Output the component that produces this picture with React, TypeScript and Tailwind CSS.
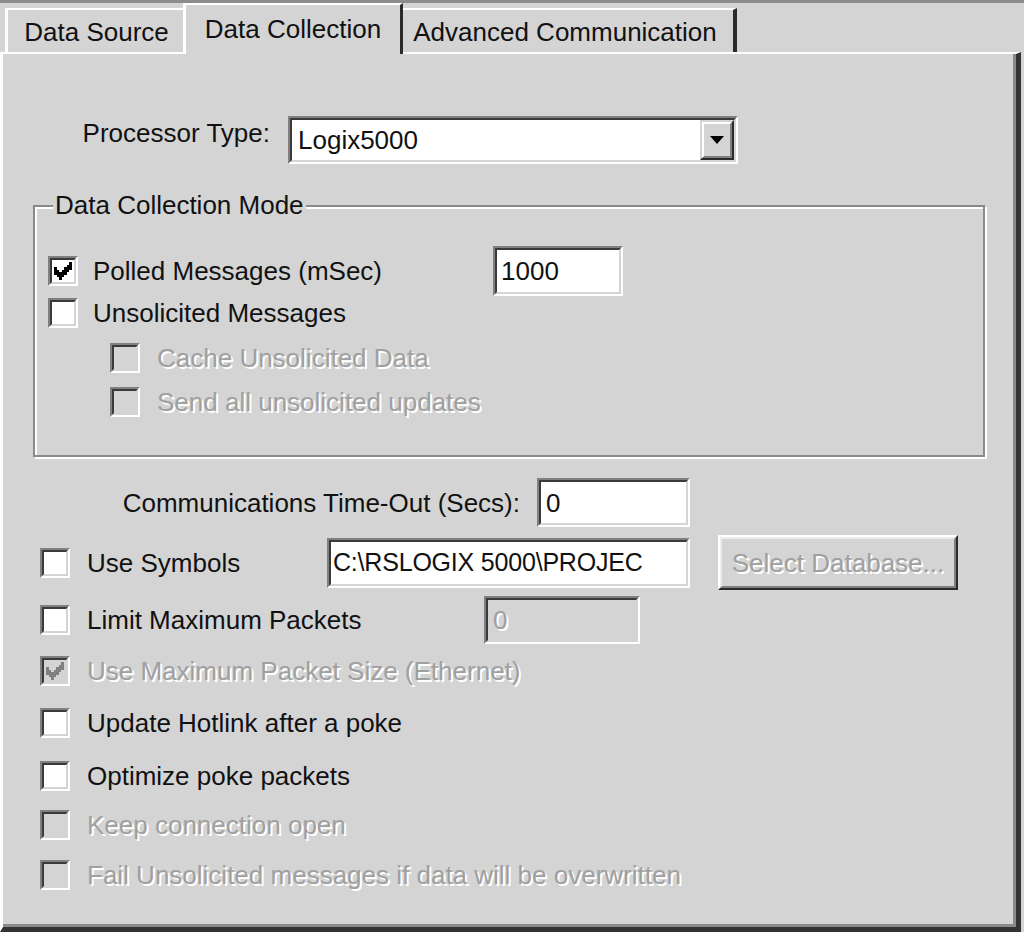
import React from "react";

const DIS = "text-[#a0a0a0] [text-shadow:2px_2px_0_#ffffff]";

function CheckMark({ color }: { color: string }) {
  const px: [number, number][] = [
    [6, 0],
    [5, 1], [6, 1],
    [0, 2], [4, 2], [5, 2], [6, 2],
    [0, 3], [1, 3], [3, 3], [4, 3], [5, 3],
    [0, 4], [1, 4], [2, 4], [3, 4], [4, 4],
    [1, 5], [2, 5], [3, 5],
    [2, 6],
  ];
  return (
    <svg width="18" height="18" viewBox="0 0 7 7" shapeRendering="crispEdges">
      {px.map(([x, y], i) => (
        <rect key={i} x={x} y={y} width="1" height="1" fill={color} />
      ))}
    </svg>
  );
}

function Check({ checked, disabled }: { checked?: boolean; disabled?: boolean }) {
  return (
    <div className="w-[30px] h-[30px] shrink-0 border-2 border-t-[#808080] border-l-[#808080] border-b-white border-r-white">
      <div
        className={
          disabled
            ? "w-full h-full border-2 border-t-[#3a3a3a] border-l-[#3a3a3a] border-b-[#d4d4d4] border-r-[#d4d4d4] bg-[#d4d4d4] flex items-center justify-center"
            : "w-full h-full border-2 border-t-[#3a3a3a] border-l-[#3a3a3a] border-b-[#d4d4d4] border-r-[#d4d4d4] bg-white flex items-center justify-center"
        }
      >
        {checked && <CheckMark color={disabled ? "#808080" : "#000000"} />}
      </div>
    </div>
  );
}

function Sunken({ className, children, disabled }: { className: string; children?: React.ReactNode; disabled?: boolean }) {
  return (
    <div className={"shrink-0 border-2 border-t-[#808080] border-l-[#808080] border-b-white border-r-white " + className}>
      <div
        className={
          disabled
            ? "w-full h-full border-2 border-t-[#3a3a3a] border-l-[#3a3a3a] border-b-[#d4d4d4] border-r-[#d4d4d4] bg-[#d4d4d4] flex items-center overflow-hidden"
            : "w-full h-full border-2 border-t-[#3a3a3a] border-l-[#3a3a3a] border-b-[#d4d4d4] border-r-[#d4d4d4] bg-white flex items-center overflow-hidden"
        }
      >
        {children}
      </div>
    </div>
  );
}

function CheckRow({
  label,
  checked,
  disabled,
  className,
}: {
  label: string;
  checked?: boolean;
  disabled?: boolean;
  className: string;
}) {
  return (
    <div className={"flex items-center h-[34px] " + className}>
      <Check checked={checked} disabled={disabled} />
      <span className={disabled ? "ml-[17px] whitespace-nowrap " + DIS : "ml-[17px] whitespace-nowrap text-[#111]"}>{label}</span>
    </div>
  );
}

export default function App() {
  return (
    <div
      className="w-[1024px] h-[932px] bg-[#d4d4d4] flex flex-col overflow-hidden text-[26px] leading-none text-[#111]"
      style={{ fontFamily: '"Liberation Sans", Arial, sans-serif' }}
    >
      {/* top strip */}
      <div className="h-[3px] bg-[#8c8c8c] shrink-0" />
      {/* tabs */}
      <div className="h-[49px] shrink-0 flex items-end pl-[5px]">
        <div className="w-[180px] h-[44px] border-t-2 border-l-[3px] border-white flex items-center justify-center pt-[2px]">
          Data Source
        </div>
        <div className="relative z-10 -mb-[2px] -ml-[2px] w-[220px] h-[51px] bg-[#d4d4d4] border-t-2 border-l-[3px] border-t-white border-l-white border-r-[3px] border-r-[#2a2a2a] flex items-start justify-center pt-[11px]">
          Data Collection
        </div>
        <div className="w-[334px] h-[44px] border-t-2 border-t-white border-r-[4px] border-r-[#2a2a2a] flex items-center justify-center pt-[2px] pr-[6px]">
          Advanced Communication
        </div>
      </div>
      {/* panel */}
      <div className="flex-1 flex flex-col border-t-2 border-l-[3px] border-t-white border-l-white border-r-[5px] border-b-[5px] border-r-[#333] border-b-[#333] shadow-[inset_-3px_-3px_0_#8a8a8a] mr-[3px]">
        {/* Processor type */}
        <div className="mt-[62px] h-[48px] flex items-center">
          <div className="w-[267px] mb-[14px] text-right whitespace-nowrap">Processor Type:</div>
          <Sunken className="ml-[18px] w-[450px] h-[48px]">
            <span className="pl-[6px] flex-1">Logix5000</span>
            <div className="w-[34px] h-full border-2 border-t-[#d4d4d4] border-l-[#d4d4d4] border-b-[#2a2a2a] border-r-[#2a2a2a]">
              <div className="w-full h-full border-2 border-t-white border-l-white border-b-[#808080] border-r-[#808080] bg-[#d4d4d4] flex items-center justify-center">
                <svg width="14" height="8" viewBox="0 0 14 8">
                  <path d="M0 0 H14 L7 8 Z" fill="#000" />
                </svg>
              </div>
            </div>
          </Sunken>
        </div>

        {/* Group box */}
        <div className="relative mt-[41px] ml-[30px] w-[952px] h-[252px] shrink-0 border-2 border-[#8a8a8a] shadow-[inset_2px_2px_0_#ffffff,2px_2px_0_#ffffff] flex flex-col">
          <div className="absolute left-[18px] top-[-15px] px-[2px] bg-[#d4d4d4] whitespace-nowrap">Data Collection Mode</div>
          <div className="mt-[39px] h-[50px] flex items-center pl-[13px]">
            <Check checked />
            <span className="ml-[15px] w-[400px] whitespace-nowrap">Polled Messages (mSec)</span>
            <Sunken className="w-[130px] h-[50px]">
              <span className="pl-[4px]">1000</span>
            </Sunken>
          </div>
          <div className="h-[34px] flex items-center pl-[13px]">
            <Check />
            <span className="ml-[15px] whitespace-nowrap">Unsolicited Messages</span>
          </div>
          <CheckRow className="mt-[11px] pl-[75px]" label="Cache Unsolicited Data" disabled />
          <CheckRow className="mt-[10px] pl-[75px]" label="Send all unsolicited updates" disabled />
        </div>

        {/* Comm timeout */}
        <div className="mt-[21px] h-[49px] flex items-center">
          <div className="w-[517px] text-right whitespace-nowrap">Communications Time-Out (Secs):</div>
          <Sunken className="ml-[17px] w-[153px] h-[49px]">
            <span className="pl-[5px]">0</span>
          </Sunken>
        </div>

        {/* Use symbols */}
        <div className="mt-[8px] h-[55px] flex items-center pl-[37px]">
          <Check />
          <span className="ml-[17px] w-[240px] whitespace-nowrap">Use Symbols</span>
          <Sunken className="w-[363px] h-[50px]">
            <span className="pl-[2px] whitespace-nowrap text-[25px] tracking-[-0.2px]">C:\RSLOGIX 5000\PROJEC</span>
          </Sunken>
          <div className="ml-[28px] w-[240px] h-[55px] border-2 border-t-white border-l-white border-b-[#2a2a2a] border-r-[#2a2a2a]">
            <div className="w-full h-full border-2 border-t-[#ececec] border-l-[#ececec] border-b-[#808080] border-r-[#808080] flex items-center justify-center">
              <span className={"whitespace-nowrap " + DIS}>Select Database...</span>
            </div>
          </div>
        </div>

        {/* Limit max packets */}
        <div className="mt-[6px] h-[48px] flex items-center pl-[37px]">
          <Check />
          <span className="ml-[17px] w-[397px] whitespace-nowrap">Limit Maximum Packets</span>
          <Sunken className="w-[156px] h-[48px]" disabled>
            <span className={"pl-[5px] " + DIS}>0</span>
          </Sunken>
        </div>

        <CheckRow className="mt-[10px] pl-[37px]" label="Use Maximum Packet Size (Ethernet)" checked disabled />
        <CheckRow className="mt-[18px] pl-[37px]" label="Update Hotlink after a poke" />
        <CheckRow className="mt-[19px] pl-[37px]" label="Optimize poke packets" />
        <CheckRow className="mt-[15px] pl-[37px]" label="Keep connection open" disabled />
        <CheckRow className="mt-[16px] pl-[37px]" label="Fail Unsolicited messages if data will be overwritten" disabled />
      </div>
    </div>
  );
}
